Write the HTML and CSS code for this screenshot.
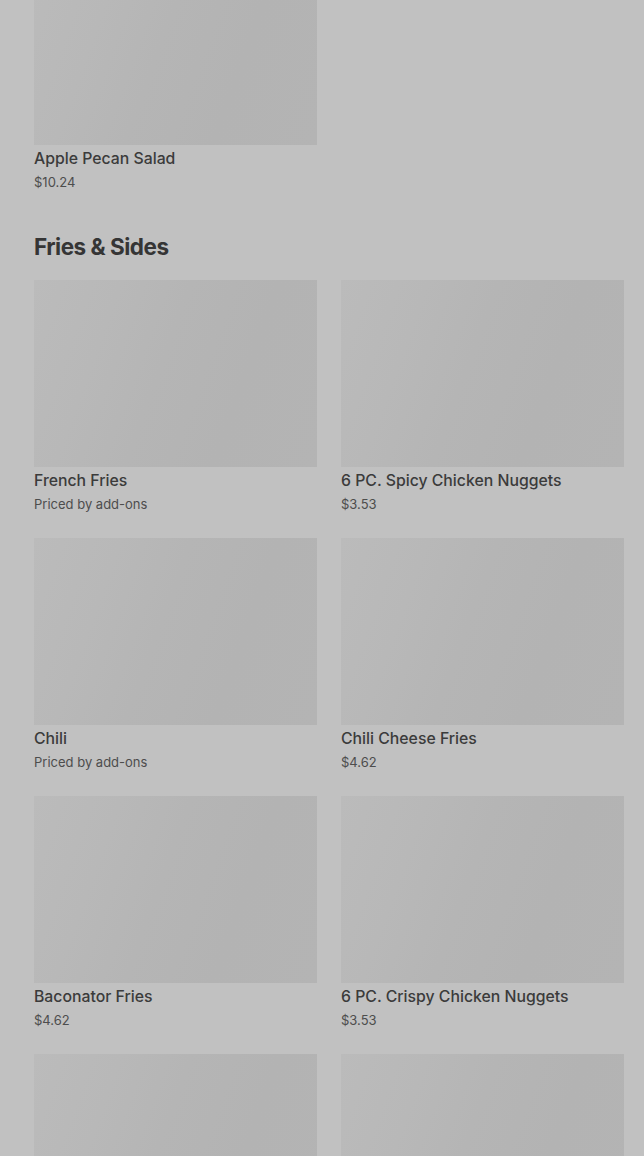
FILE: index.html
```html
<!DOCTYPE html>
<html lang="en">
<head>
    <meta charset="UTF-8">
    <meta name="viewport" content="width=device-width, initial-scale=1.0">
    <title>Menu</title>
    <link rel="stylesheet" href="styles.css">
</head>
<body>
<div class="menu">
    <section class="category category-top">
        <div class="grid">
            <div class="item">
                <div class="item-img"></div>
                <div class="item-name">Apple Pecan Salad</div>
                <div class="item-price">$10.24</div>
            </div>
        </div>
    </section>

    <section class="category">
        <h2>Fries &amp; Sides</h2>
        <div class="grid">
            <div class="item">
                <div class="item-img"></div>
                <div class="item-name">French Fries</div>
                <div class="item-price">Priced by add-ons</div>
            </div>
            <div class="item">
                <div class="item-img"></div>
                <div class="item-name">6 PC. Spicy Chicken Nuggets</div>
                <div class="item-price">$3.53</div>
            </div>
            <div class="item">
                <div class="item-img"></div>
                <div class="item-name">Chili</div>
                <div class="item-price">Priced by add-ons</div>
            </div>
            <div class="item">
                <div class="item-img"></div>
                <div class="item-name">Chili Cheese Fries</div>
                <div class="item-price">$4.62</div>
            </div>
            <div class="item">
                <div class="item-img"></div>
                <div class="item-name">Baconator Fries</div>
                <div class="item-price">$4.62</div>
            </div>
            <div class="item">
                <div class="item-img"></div>
                <div class="item-name">6 PC. Crispy Chicken Nuggets</div>
                <div class="item-price">$3.53</div>
            </div>
            <div class="item">
                <div class="item-img"></div>
            </div>
            <div class="item">
                <div class="item-img"></div>
            </div>
        </div>
    </section>
</div>
</body>
</html>
```

FILE: styles.css
```css
body {
    margin: 0;
    background-color: #c1c1c1;
    font-family: 'Inter', 'Roboto', sans-serif;
    color: #3a3a3a;
    overflow: hidden;
}

.menu {
    padding: 0 20px 0 34px;
}

.category-top {
    margin-top: -42px;
}

.category h2 {
    margin: 39px 0 17px;
    font-size: 22.5px;
    line-height: 32px;
    font-weight: 700;
    letter-spacing: -0.5px;
    color: #353535;
}

.grid {
    display: grid;
    grid-template-columns: 283px 283px;
    column-gap: 24px;
    row-gap: 24px;
}

.item-img {
    height: 187px;
    background: linear-gradient(110deg, #bbbbbb 0%, #b8b8b8 25%, #b5b5b5 45%, #b3b3b3 70%, #b4b4b4 100%);
}

.item-name {
    margin-top: 4px;
    font-size: 15.8px;
    line-height: 20px;
    font-weight: 500;
    color: #3b3b3b;
}

.item-price {
    margin-top: 3px;
    font-size: 13px;
    line-height: 20px;
    color: #4d4d4d;
}
```
